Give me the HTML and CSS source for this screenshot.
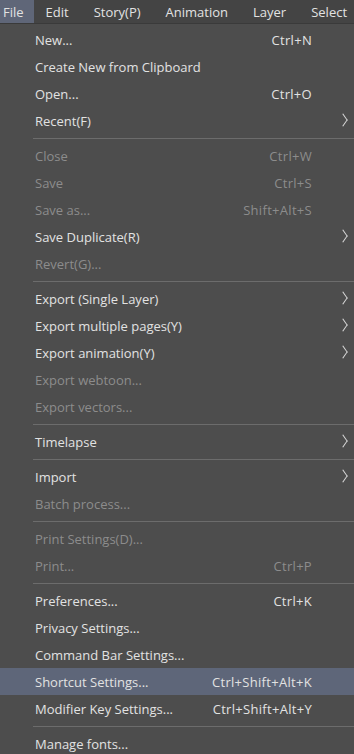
FILE: index.html
```html
<!DOCTYPE html>
<html lang="en">
<head>
  <meta charset="UTF-8"/>
  <title>File menu</title>
  <link rel="stylesheet" href="styles.css">
</head>
<body>
<div class="menubar">
  <span class="top active">File</span>
  <span class="top">Edit</span>
  <span class="top">Story(P)</span>
  <span class="top">Animation</span>
  <span class="top">Layer</span>
  <span class="top">Select</span>
</div>

<ul class="menu">
  <li class="item"><span class="label">New...</span><span class="key">Ctrl+N</span></li>
  <li class="item"><span class="label">Create New from Clipboard</span></li>
  <li class="item"><span class="label">Open...</span><span class="key">Ctrl+O</span></li>
  <li class="item sub"><span class="label">Recent(F)</span></li>
  <li class="sep"></li>
  <li class="item off"><span class="label">Close</span><span class="key">Ctrl+W</span></li>
  <li class="item off"><span class="label">Save</span><span class="key">Ctrl+S</span></li>
  <li class="item off"><span class="label">Save as...</span><span class="key">Shift+Alt+S</span></li>
  <li class="item sub"><span class="label">Save Duplicate(R)</span></li>
  <li class="item off"><span class="label">Revert(G)...</span></li>
  <li class="sep"></li>
  <li class="item sub"><span class="label">Export (Single Layer)</span></li>
  <li class="item sub"><span class="label">Export multiple pages(Y)</span></li>
  <li class="item sub"><span class="label">Export animation(Y)</span></li>
  <li class="item off"><span class="label">Export webtoon...</span></li>
  <li class="item off"><span class="label">Export vectors...</span></li>
  <li class="sep"></li>
  <li class="item sub"><span class="label">Timelapse</span></li>
  <li class="sep"></li>
  <li class="item sub"><span class="label">Import</span></li>
  <li class="item off"><span class="label">Batch process...</span></li>
  <li class="sep"></li>
  <li class="item off"><span class="label">Print Settings(D)...</span></li>
  <li class="item off"><span class="label">Print...</span><span class="key">Ctrl+P</span></li>
  <li class="sep"></li>
  <li class="item"><span class="label">Preferences...</span><span class="key">Ctrl+K</span></li>
  <li class="item"><span class="label">Privacy Settings...</span></li>
  <li class="item"><span class="label">Command Bar Settings...</span></li>
  <li class="item hover"><span class="label">Shortcut Settings...</span><span class="key">Ctrl+Shift+Alt+K</span></li>
  <li class="item"><span class="label">Modifier Key Settings...</span><span class="key">Ctrl+Shift+Alt+Y</span></li>
  <li class="sep"></li>
  <li class="item"><span class="label">Manage fonts...</span></li>
</ul>
</body>
</html>
```

FILE: styles.css
```css
body {
    margin: 0;
    background-color: #4d4d4d;
    font-family: "Open Sans", "Noto Sans", sans-serif;
    font-size: 13px;
    color: #e2e2e2;
    overflow: hidden;
}

.menubar {
    display: flex;
    height: 23px;
    background-color: #444444;
    border-bottom: 1px solid #3a3a3a;
    white-space: nowrap;
}

.top {
    display: flex;
    align-items: center;
    padding: 0 13px 0 11px;
    margin-right: 1px;
}

.top:first-child {
    padding: 0 10px 0 3px;
}

.top.active {
    background-color: #5f6678;
}

.menu {
    list-style: none;
    margin: 0;
    padding: 2px 0 0 0;
}

.item {
    display: flex;
    align-items: center;
    height: 27px;
    padding-left: 35px;
    padding-right: 42px;
    position: relative;
    white-space: nowrap;
}

.label {
    flex: 1;
}

.key {
    text-align: right;
    letter-spacing: 0.3px;
}

.off {
    color: #8c8c8c;
}

.hover {
    background-color: #5e6679;
}

.sub::after {
    content: "";
    position: absolute;
    right: 7px;
    top: 9px;
    width: 7px;
    height: 7px;
    border-top: 1px solid #d8d8d8;
    border-right: 1px solid #d8d8d8;
    transform: rotate(45deg) skew(10deg, 10deg);
}

.sep {
    height: 1px;
    margin: 4px 0 3px 33px;
    background-color: #6c6c6c;
}
```
